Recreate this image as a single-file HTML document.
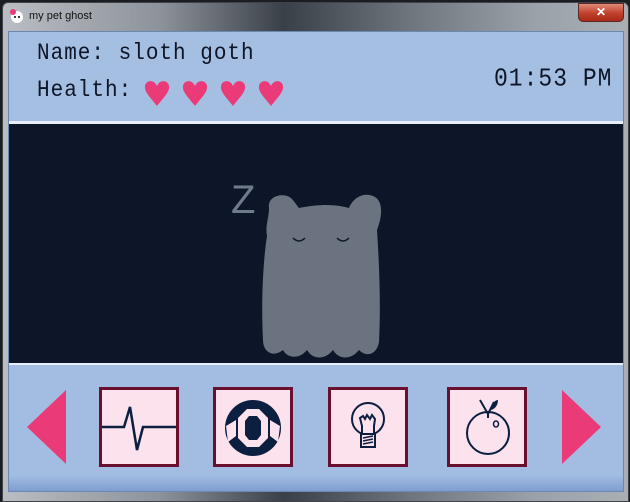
<!DOCTYPE html>
<html><head><style>
body{margin:0;width:630px;height:500px;overflow:hidden;background:#1a1d22;position:relative;font-family:"Liberation Mono",monospace}
.win{position:absolute;left:2px;top:2px;width:625px;height:498px;border-radius:6px 6px 0 0;background:linear-gradient(90deg,#b9bec4 0%,#8d939a 25%,#3a4047 45%,#6e757c 65%,#9aa1a8 85%,#a9afb5 100%);border:1px solid #404448}
.title{position:absolute;left:29px;top:10px;font:11px "Liberation Sans",sans-serif;color:#111}
.close{position:absolute;left:578px;top:3px;width:44px;height:17px;border-radius:0 0 5px 5px;background:linear-gradient(#e08a78,#c0402a 55%,#a82a18);border:1px solid #5a2a22;color:#fff;font:bold 12px "Liberation Sans",sans-serif;text-align:center;line-height:16px}
.panel{position:absolute;left:8px;top:31px;width:614px;height:459px;background:#a3bde2;border:1px solid #6a88b0}
.top{position:absolute;left:0;top:0;width:614px;height:88px;background:#a5bfe3}
.dark{position:absolute;left:0;top:89px;width:614px;height:239px;background:#0d1628;border-top:3px solid #e6eefa;border-bottom:2px solid #e6eefa}
.t{position:absolute;color:#0d1628;font-size:21px;letter-spacing:1px;transform:scaleY(1.12);transform-origin:top left}
.btn{position:absolute;top:355px;width:74px;height:74px;background:#fbe2ec;border:3px solid #6b0f2e}
.bot{position:absolute;left:0;top:443px;width:614px;height:16px;background:linear-gradient(#a3bde2,#7e9ed0)}
</style></head><body>
<div class="win"></div>
<svg style="position:absolute;left:9px;top:8px" width="16" height="16"><circle cx="8" cy="9" r="6" fill="#fff"/><circle cx="4" cy="4" r="3" fill="#e83c7a"/><circle cx="6" cy="9" r="1" fill="#000"/><circle cx="10" cy="9" r="1" fill="#000"/></svg>
<div class="title">my pet ghost</div>
<div class="close">✕</div>
<div class="panel">
<div class="top"></div>
<div class="t" style="left:28px;top:9px">Name: sloth goth</div>
<div class="t" style="left:28px;top:46px">Health:</div>
<div class="t" style="left:485px;top:32px;font-size:23px">01:53 PM</div>
<svg style="position:absolute;left:134px;top:46px" width="150" height="32">
<g fill="#ea3a78">
<path id="h" d="M14 28 C8 20 1 14 2 8 C3 2 11 1 14 8 C17 1 25 2 26 8 C27 14 20 20 14 28Z"/>
<use href="#h" x="38"/><use href="#h" x="76"/><use href="#h" x="114"/>
</g></svg>
<div class="dark"></div>
<div style="position:absolute;left:222px;top:146px;color:#6f7a8a;font:40px 'Liberation Sans',sans-serif">Z</div>
<svg style="position:absolute;left:250px;top:160px" width="130" height="170">
<path fill="#6c7380" d="M10 16 C8 4 24 0 32 6 C36 10 38 14 40 16 C60 12 76 12 90 16 C94 6 104 0 114 4 C124 8 124 22 118 38 C120 70 122 110 120 150 C118 162 108 166 100 158 C92 168 80 168 74 158 C66 168 54 168 48 158 C40 168 28 166 24 158 C14 166 4 160 4 148 C2 110 4 70 8 44 C6 34 10 26 10 16Z"/>
<path d="M34 46 q6 6 12 0 M78 46 q6 6 12 0" stroke="#0d1628" stroke-width="1.5" fill="none"/>
</svg>
<div class="bot"></div>
<svg style="position:absolute;left:18px;top:358px" width="40" height="75"><path d="M39 0 V74 L0 37Z" fill="#ea3a78"/></svg>
<svg style="position:absolute;left:553px;top:358px" width="40" height="75"><path d="M0 0 V74 L39 37Z" fill="#ea3a78"/></svg>
<div class="btn" style="left:90px"><svg width="74" height="74"><path d="M0 37 H22 L28 17 L35 60 L41 37 H74" stroke="#0d1f40" stroke-width="2.5" fill="none"/></svg></div>
<div class="btn" style="left:204px"><svg width="74" height="74"><circle cx="37" cy="38" r="28" fill="#0d1f40"/><path d="M22 28 L31 19 H43 L52 28 V48 L43 57 H31 L22 48Z" fill="#fbe2ec"/><path d="M29 31 L33 26 H41 L45 31 V45 L41 50 H33 L29 45Z" fill="#0d1f40"/><path d="M10 36 L20 30 V46 L12 52Z M64 36 L54 30 V46 L62 52Z" fill="#fbe2ec"/></svg></div>
<div class="btn" style="left:319px"><svg width="74" height="74"><circle cx="37" cy="29" r="16" stroke="#0d1f40" stroke-width="2" fill="none"/><path d="M31 44 V36 L29 28 L32 26 L34 29 L36 25 L39 29 L41 25 L44 29 L43 36 V44 M30 44 H44 V57 H30Z" stroke="#0d1f40" stroke-width="2" fill="#fbe2ec"/><path d="M32 48 L42 46 M32 51 L42 49 M32 54 L42 52" stroke="#0d1f40" stroke-width="1.5"/></svg></div>
<div class="btn" style="left:438px"><svg width="74" height="74"><circle cx="38" cy="43" r="21" stroke="#0d1f40" stroke-width="2" fill="none"/><path d="M30 10 L38 24 L44 12 M38 24 V28" stroke="#0d1f40" stroke-width="2" fill="none"/><path d="M40 20 C42 12 46 10 48 10 C48 16 44 20 40 20Z" fill="#0d1f40"/><ellipse cx="46" cy="34" rx="2.5" ry="3" stroke="#0d1f40" stroke-width="1.5" fill="none"/></svg></div>
</div>
</body></html>
